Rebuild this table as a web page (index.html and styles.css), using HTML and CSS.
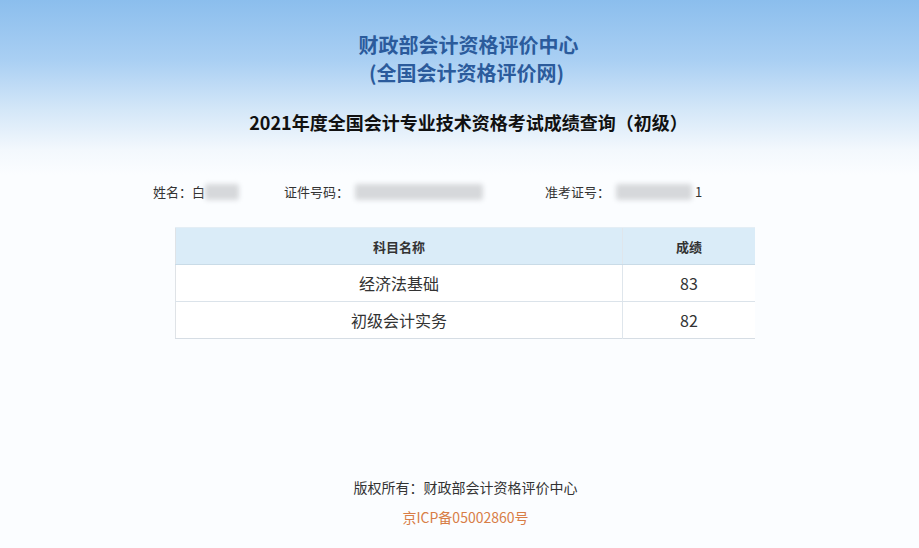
FILE: index.html
```html
<!DOCTYPE html>
<html lang="zh">
<head>
<meta charset="utf-8">
<title>成绩查询</title>
<link rel="stylesheet" href="styles.css">
</head>
<body>
<div class="page">
  <header class="head">
    <div class="org">财政部会计资格评价中心</div>
    <div class="org sub">(全国会计资格评价网)</div>
    <h1 class="title">2021年度全国会计专业技术资格考试成绩查询（初级）</h1>
  </header>
  <div class="info">
    <div class="field f-name"><span>姓名：白</span><span class="blur b1"></span></div>
    <div class="field f-id"><span>证件号码：</span><span class="blur b2"></span></div>
    <div class="field f-no"><span>准考证号：</span><span class="blur b3"></span><span>1</span></div>
  </div>
  <table class="scores">
    <thead>
      <tr><th class="c1">科目名称</th><th class="c2">成绩</th></tr>
    </thead>
    <tbody>
      <tr><td>经济法基础</td><td>83</td></tr>
      <tr><td>初级会计实务</td><td>82</td></tr>
    </tbody>
  </table>
  <footer class="foot">
    <div class="copy">版权所有：财政部会计资格评价中心</div>
    <div class="icp">京ICP备05002860号</div>
  </footer>
</div>
</body>
</html>
```

FILE: styles.css
```css
html, body {
  margin: 0;
  padding: 0;
}
body {
  width: 919px;
  height: 548px;
  overflow: hidden;
  font-family: "Noto Sans CJK SC", "Microsoft YaHei", sans-serif;
  color: #333;
  background: linear-gradient(to bottom, #8bbeed 0px, #a9cff3 60px, #d4e7f8 110px, #f3f8fd 150px, #fbfdff 175px, #fbfdff 548px);
}
.page {
  display: flex;
  flex-direction: column;
  align-items: center;
}
.head {
  display: flex;
  flex-direction: column;
  align-items: center;
  padding-top: 31px;
  padding-left: 18px;
}
.org {
  font-size: 20px;
  font-weight: bold;
  color: #2b5b9c;
  line-height: 28px;
}
.org.sub {
  margin-left: -4px;
}
.title {
  margin: 22px 0 0 0;
  font-size: 18px;
  font-weight: bold;
  color: #111;
  line-height: 26px;
}
.info {
  width: 560px;
  margin-top: 47px;
  margin-left: -53px;
  display: flex;
  font-size: 13px;
  color: #333;
  line-height: 20px;
}
.field {
  display: flex;
  align-items: center;
}
.f-name { width: 131px; }
.f-id { width: 261px; }
.blur {
  display: inline-block;
  height: 16px;
  background: #d6d8db;
  filter: blur(2.5px);
  border-radius: 3px;
}
.b1 { width: 34px; }
.b2 { width: 128px; margin-left: 6px; }
.b3 { width: 76px; margin-left: 6px; margin-right: 3px; }
.scores {
  margin-top: 25px;
  margin-left: 11px;
  width: 580px;
  border-collapse: collapse;
  background: #fff;
  border-left: 1px solid #dfe3e7;
  border-bottom: 1px solid #d6dde4;
}
.scores th {
  height: 36px;
  background: #daecf8;
  font-size: 13px;
  font-weight: bold;
  color: #333;
  border-top: 1px solid #e4eef5;
  border-bottom: 1px solid #c9dbe7;
  padding: 0;
}
.scores td {
  height: 36px;
  font-size: 16px;
  color: #333;
  text-align: center;
  padding: 0;
  border-bottom: 1px solid #dbe3ea;
}
.scores tr:last-child td { border-bottom: none; }
.scores .c1 { width: 446px; }
.scores th + th, .scores td + td {
  border-left: 1px solid #dfe6ec;
}
.foot {
  margin-top: 138px;
  padding-left: 12px;
  display: flex;
  flex-direction: column;
  align-items: center;
  font-size: 14px;
}
.copy {
  color: #333;
  line-height: 20px;
}
.icp {
  margin-top: 10px;
  color: #d87e47;
  line-height: 20px;
}
```
